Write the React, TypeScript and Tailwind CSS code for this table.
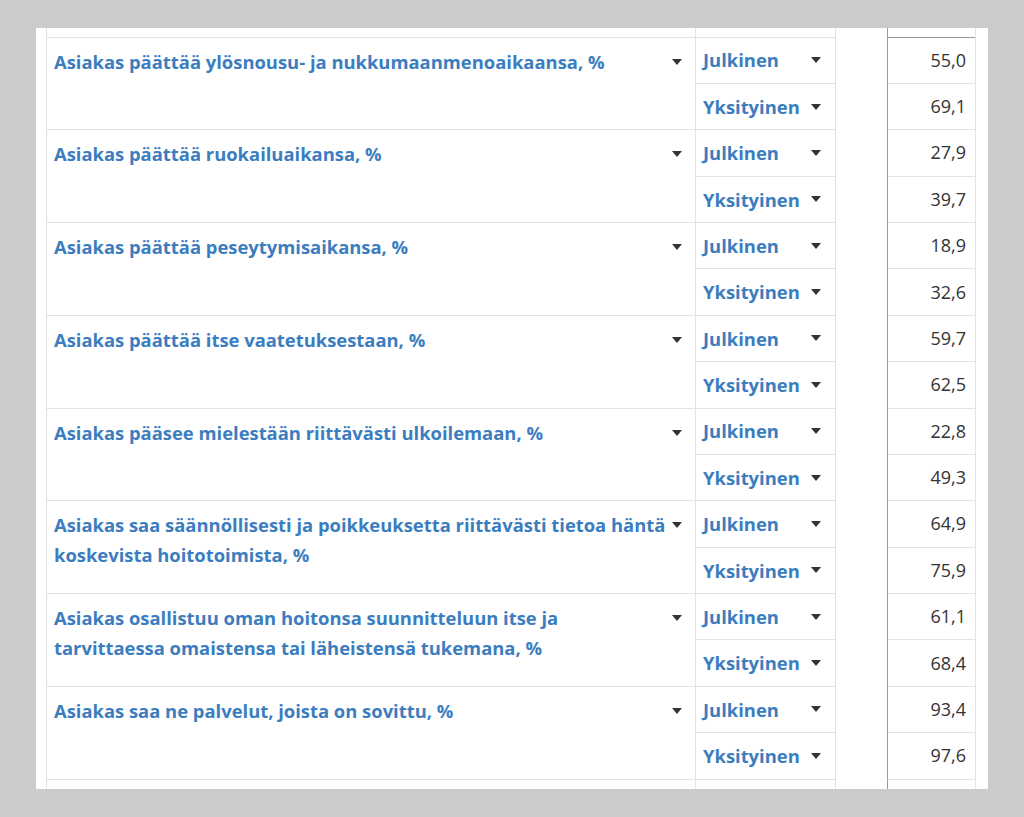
import React from "react";

const groups: { label: string[]; a: string; b: string }[] = [
  { label: ["Asiakas päättää ylösnousu- ja nukkumaanmenoaikaansa, %"], a: "55,0", b: "69,1" },
  { label: ["Asiakas päättää ruokailuaikansa, %"], a: "27,9", b: "39,7" },
  { label: ["Asiakas päättää peseytymisaikansa, %"], a: "18,9", b: "32,6" },
  { label: ["Asiakas päättää itse vaatetuksestaan, %"], a: "59,7", b: "62,5" },
  { label: ["Asiakas pääsee mielestään riittävästi ulkoilemaan, %"], a: "22,8", b: "49,3" },
  {
    label: ["Asiakas saa säännöllisesti ja poikkeuksetta riittävästi tietoa häntä", "koskevista hoitotoimista, %"],
    a: "64,9",
    b: "75,9",
  },
  {
    label: ["Asiakas osallistuu oman hoitonsa suunnitteluun itse ja", "tarvittaessa omaistensa tai läheistensä tukemana, %"],
    a: "61,1",
    b: "68,4",
  },
  { label: ["Asiakas saa ne palvelut, joista on sovittu, %"], a: "93,4", b: "97,6" },
];

const FONT = { fontFamily: "'Open Sans', 'Noto Sans', sans-serif" };

function Caret() {
  return (
    <svg width="10" height="6" viewBox="0 0 10 6" className="shrink-0">
      <path d="M0 0 H10 L5 6 Z" fill="#333" />
    </svg>
  );
}

function Stub({ h, topLine }: { h: string; topLine: boolean }) {
  return (
    <div className={`flex shrink-0 ${h}`}>
      <div className="w-[10px]" />
      <div className={`w-[649px] border-l border-[#e2e2e2] ${topLine ? "border-t" : ""}`} />
      <div className={`w-[141px] border-l border-r border-[#e2e2e2] ${topLine ? "border-t" : ""}`} />
      <div className="w-[51px]" />
      <div className={`w-[89px] border-l border-l-[#9a9a9a] border-r border-r-[#e2e2e2] ${topLine ? "border-t border-t-[#e2e2e2]" : ""}`} />
      <div className="w-[12px]" />
    </div>
  );
}

export default function App() {
  return (
    <div className="w-[1024px] h-[817px] bg-[#cbcbcb] pt-[28px] pl-[36px] overflow-hidden">
      <div className="w-[952px] h-[761px] bg-white flex flex-col overflow-hidden">
        <Stub h="h-[8.5px]" topLine={false} />
        {groups.map((g, i) => (
          <div key={i} className="flex shrink-0 h-[92.75px]">
            <div className="w-[10px]" />
            <div className="w-[649px] border-l border-t border-[#e2e2e2] flex items-start pl-[7px] pr-[13px] pt-[9px]">
              <div className="flex-1 text-[18.4px] leading-[30px] font-bold text-[#3b7dbf]" style={FONT}>
                {g.label.map((l, j) => (
                  <div key={j} className="whitespace-nowrap">{l}</div>
                ))}
              </div>
              <div className="pt-[12px]">
                <Caret />
              </div>
            </div>
            <div className="w-[141px] border-l border-r border-[#e2e2e2] flex flex-col">
              {["Julkinen", "Yksityinen"].map((t, j) => (
                <div
                  key={j}
                  className="flex-1 border-t border-[#e2e2e2] flex items-center justify-between pl-[7px] pr-[14px]"
                >
                  <span className="text-[18.4px] font-bold text-[#3b7dbf]" style={FONT}>
                    {t}
                  </span>
                  <Caret />
                </div>
              ))}
            </div>
            <div className="w-[51px]" />
            <div className="w-[89px] border-l border-l-[#9a9a9a] border-r border-r-[#e2e2e2] flex flex-col">
              {[g.a, g.b].map((v, j) => (
                <div
                  key={j}
                  className={`flex-1 border-t flex items-center justify-end pr-[9px] ${
                    i === 0 && j === 0 ? "border-t-[#9a9a9a]" : "border-t-[#e2e2e2]"
                  }`}
                >
                  <span className="text-[18px] text-[#333333]" style={FONT}>
                    {v}
                  </span>
                </div>
              ))}
            </div>
            <div className="w-[12px]" />
          </div>
        ))}
        <Stub h="h-[20px]" topLine={true} />
      </div>
    </div>
  );
}
